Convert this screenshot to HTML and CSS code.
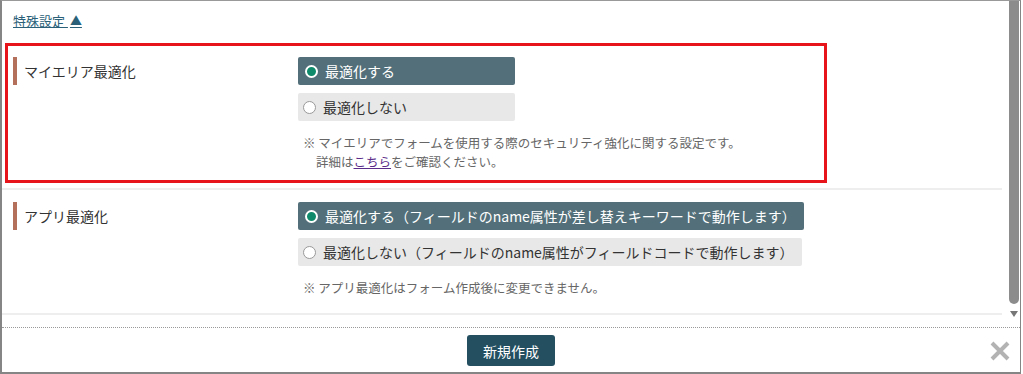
FILE: index.html
```html
<!DOCTYPE html>
<html lang="ja">
<head>
    <meta charset="UTF-8">
    <title>特殊設定</title>
    <link rel="stylesheet" href="styles.css">
</head>
<body>
    <div class="dialog">
        <div class="dialog-body">
            <div class="scroll-area">
                <div class="toggle-row"><a class="toggle" href="#">特殊設定 <span class="caret">▲</span></a></div>

                <div class="setting highlight">
                    <div class="label-col"><span class="label">マイエリア最適化</span></div>
                    <div class="option-col">
                        <label class="option option-short selected"><span class="radio"></span>最適化する</label>
                        <label class="option option-short"><span class="radio"></span>最適化しない</label>
                        <div class="note">
                            <div>※ マイエリアでフォームを使用する際のセキュリティ強化に関する設定です。</div>
                            <div class="note-indent">詳細は<a href="#" class="note-link">こちら</a>をご確認ください。</div>
                        </div>
                    </div>
                </div>
                <div class="separator first"></div>

                <div class="setting">
                    <div class="label-col"><span class="label">アプリ最適化</span></div>
                    <div class="option-col">
                        <label class="option selected"><span class="radio"></span>最適化する（フィールドのname属性が差し替えキーワードで動作します）</label>
                        <label class="option"><span class="radio"></span>最適化しない（フィールドのname属性がフィールドコードで動作します）</label>
                        <div class="note">
                            <div>※ アプリ最適化はフォーム作成後に変更できません。</div>
                        </div>
                    </div>
                </div>
                <div class="separator"></div>
            </div>
            <div class="scrollbar">
                <div class="thumb"></div>
                <div class="arrow"></div>
            </div>
        </div>
        <div class="footer">
            <button class="create-btn">新規作成</button>
            <span class="close">
                <svg width="20" height="20" viewBox="0 0 20 20">
                    <path d="M2 2 L18 18 M18 2 L2 18" stroke="#b3b3b3" stroke-width="4"/>
                </svg>
            </span>
        </div>
    </div>
</body>
</html>
```

FILE: styles.css
```css
body {
    margin: 0;
    background-color: white;
    font-family: "Noto Sans CJK JP", "Noto Sans", sans-serif;
    color: #333;
}
.dialog {
    width: 1021px;
    height: 374px;
    box-sizing: border-box;
    border-left: 2px solid #858585;
    border-top: 1px solid #999;
    border-right: 1px solid #858585;
    border-bottom: 2px solid #858585;
    display: flex;
    flex-direction: column;
}
.dialog-body {
    height: 326px;
    display: flex;
    overflow: hidden;
}
.scroll-area {
    flex: 1;
    padding: 8px 6px 0 0;
    overflow: hidden;
}
.toggle-row {
    height: 20px;
    line-height: 20px;
    padding-left: 11px;
}
.toggle {
    font-size: 13px;
    color: #2a6178;
}
.caret {
    font-size: 12px;
    margin-left: 2px;
}
.setting {
    display: flex;
    padding: 12px 0 16px 0;
}
.highlight {
    margin: 14px 0 0 3px;
    width: 822px;
    box-sizing: border-box;
    border: 3px solid #e8141c;
    padding: 11px 0 9px 0;
}
.label-col {
    width: 285px;
    padding-left: 11px;
    flex-shrink: 0;
}
.highlight .label-col {
    width: 285px;
    padding-left: 5px;
}
.label {
    display: block;
    border-left: 4px solid #b5705c;
    padding-left: 7px;
    font-size: 14px;
    line-height: 28px;
}
.option-col {
    display: flex;
    flex-direction: column;
    align-items: flex-start;
    gap: 8px;
}
.option {
    display: flex;
    align-items: center;
    height: 28px;
    padding: 0 8px 0 5px;
    background-color: #e8e8e8;
    border-radius: 2px;
    font-size: 14px;
    color: #333;
}
.option-short {
    width: 217px;
    box-sizing: border-box;
}
.option.selected {
    background-color: #53707a;
    color: white;
}
.radio {
    width: 11px;
    height: 11px;
    border-radius: 50%;
    border: 1px solid #999;
    background-color: white;
    margin-right: 7px;
}
.selected .radio {
    width: 9px;
    height: 9px;
    border: 2px solid white;
    background-color: #0f8a6a;
    margin-left: 2px;
}
.note {
    margin-top: 4px;
    padding-left: 5px;
    font-size: 12.5px;
    line-height: 19px;
    color: #666;
}
.note-indent {
    padding-left: 13px;
}
.note-link {
    color: #5c2c8a;
}
.separator {
    height: 2px;
    background-color: #eeeeee;
}
.separator.first {
    margin-top: 5px;
}
.scrollbar {
    width: 12px;
    flex-shrink: 0;
    display: flex;
    flex-direction: column;
    align-items: center;
}
.thumb {
    width: 10px;
    height: 303px;
    background-color: #8c8c8c;
    border-radius: 0 0 5px 5px;
}
.arrow {
    margin-top: 7px;
    width: 0;
    height: 0;
    border-left: 4px solid transparent;
    border-right: 4px solid transparent;
    border-top: 6px solid #777;
}
.footer {
    flex: 1;
    border-top: 1px dotted #999;
    display: flex;
    justify-content: center;
    align-items: flex-start;
    position: relative;
}
.create-btn {
    margin-top: 7px;
    width: 88px;
    height: 31px;
    background-color: #234f61;
    color: white;
    border: none;
    border-radius: 3px;
    font-family: "Noto Sans CJK JP", sans-serif;
    font-size: 14px;
    cursor: pointer;
}
.close {
    position: absolute;
    right: 10px;
    top: 13px;
    width: 20px;
    height: 20px;
}
```
